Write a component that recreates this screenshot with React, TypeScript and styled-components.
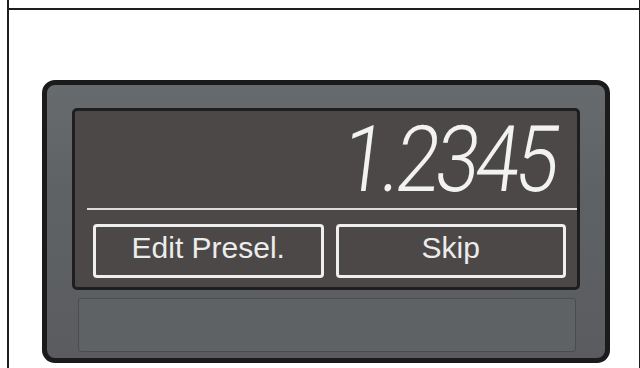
import React from "react";
import styled, { createGlobalStyle } from "styled-components";

const Global = createGlobalStyle`
  html, body { margin: 0; padding: 0; background: #ffffff; overflow: hidden; }
  body { font-family: "Liberation Sans", Arial, sans-serif; }
`;

const Table = styled.div`
  margin-left: 7px;
  width: 630px;
  height: 368px;
  border-left: 2px solid #1e1e1e;
  border-right: 2px solid #1e1e1e;
  display: flex;
  flex-direction: column;
`;

const TopCell = styled.div`
  height: 8px;
  flex: none;
`;

const Cell = styled.div`
  flex: 1;
  border-top: 2px solid #1e1e1e;
  padding: 70px 0 0 33px;
`;

const Device = styled.div`
  box-sizing: border-box;
  width: 568px;
  height: 283px;
  border: 5px solid #1b1b1b;
  border-radius: 13px;
  background: linear-gradient(180deg, #686b6e 0%, #5f6265 40%, #5a5c5f 100%);
  padding: 23px 25px 6px 25px;
  display: flex;
  flex-direction: column;
`;

const Screen = styled.div`
  height: 182px;
  flex: none;
  border: 3px solid #1f1e1e;
  border-radius: 5px;
  background: #4d4848;
  box-sizing: border-box;
  display: flex;
  flex-direction: column;
`;

const Readout = styled.div`
  height: 97px;
  flex: none;
  display: flex;
  align-items: center;
  justify-content: flex-end;
  padding-right: 22px;
`;

const Digits = styled.span`
  font-family: Roboto, "Liberation Sans", sans-serif;
  font-weight: 300;
  font-size: 92px;
  line-height: 1;
  letter-spacing: -5px;
  color: #f2f2f2;
  transform-origin: right center;
  transform: skewX(-7deg) scaleX(0.86);
  display: inline-block;
`;

const Divider = styled.div`
  height: 2px;
  margin-left: 12px;
  background: #dcdcdc;
  flex: none;
`;

const ButtonRow = styled.div`
  display: flex;
  gap: 12px;
  padding: 14px 11px 0 18px;
`;

const SoftKey = styled.div`
  flex: 1;
  height: 54px;
  box-sizing: border-box;
  border: 3px solid #efefef;
  border-radius: 4px;
  display: flex;
  align-items: center;
  justify-content: center;
  padding-bottom: 7px;
  font-family: "Liberation Sans", Arial, sans-serif;
  font-size: 30px;
  color: #ececec;
`;

const Slot = styled.div`
  margin: 8px 4px 0 6px;
  height: 54px;
  box-sizing: border-box;
  border: 1px solid #4a4c4f;
  border-radius: 3px;
  background: #5f6265;
`;

export default function App() {
  return (
    <>
      <Global />
      <Table>
        <TopCell />
        <Cell>
          <Device>
            <Screen>
              <Readout>
                <Digits>1.2345</Digits>
              </Readout>
              <Divider />
              <ButtonRow>
                <SoftKey>Edit Presel.</SoftKey>
                <SoftKey>Skip</SoftKey>
              </ButtonRow>
            </Screen>
            <Slot />
          </Device>
        </Cell>
      </Table>
    </>
  );
}
